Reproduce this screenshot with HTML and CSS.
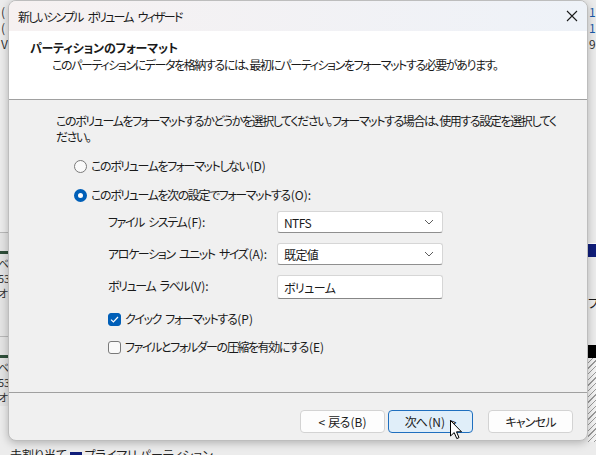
FILE: index.html
```html
<!doctype html>
<html>

<head>
    <meta charset="utf-8" />
    <title>新しいシンプル ボリューム ウィザード</title>
    <link rel="stylesheet" href="styles.css">
</head>

<body>

	<!-- disk management window behind the wizard -->
	<div class="backwin">
		<div class="bw-list">
			<div class="bw-row">(</div>
			<div class="bw-row">(</div>
			<div class="bw-row">V</div>
		</div>
		<div class="bw-list bw-right">
			<div class="bw-row blue">1</div>
			<div class="bw-row blue">1</div>
			<div class="bw-row">9</div>
		</div>
		<div class="bw-disk d1"><span class="bw-bar green"></span><span>ベー</span><span>53</span><span>オン</span></div>
		<div class="bw-disk d2"><span class="bw-bar green"></span><span>ベー</span><span>53</span><span>オン</span></div>
		<div class="bw-navy"></div>
		<div class="bw-pu">プ</div>
		<div class="bw-black"></div>
		<div class="bw-hatch"></div>
		<div class="bw-legend">未割り当て <span class="sw"></span> プライマリ パーティション</div>
	</div>

	<div class="dialog">
		<div class="titlebar">
			<span class="title">新しいシンプル ボリューム ウィザード</span>
			<svg class="close" width="12" height="12" viewBox="0 0 12 12">
				<path d="M1 1 L11 11 M11 1 L1 11" stroke="#1b1b1b" stroke-width="1.1" fill="none"/>
			</svg>
		</div>

		<div class="header">
			<div class="h-title">パーティションのフォーマット</div>
			<div class="h-sub">このパーティションにデータを格納するには、最初にパーティションをフォーマットする必要があります。</div>
		</div>

		<div class="content">
			<p class="intro">このボリュームをフォーマットするかどうかを選択してください。フォーマットする場合は、使用する設定を選択してく<br>ださい。</p>

			<div class="opt radio-row">
				<span class="radio"></span>
				<span>このボリュームをフォーマットしない<span class="key">(D)</span></span>
			</div>
			<div class="opt radio-row second">
				<span class="radio on"></span>
				<span>このボリュームを次の設定でフォーマットする<span class="key">(O):</span></span>
			</div>

			<div class="settings">
				<label>ファイル システム<span class="key">(F):</span></label>
				<div class="combo">NTFS
					<svg width="10" height="6" viewBox="0 0 10 6"><path d="M1 1 L5 5 L9 1" stroke="#5d5d5d" fill="none" stroke-width="1"/></svg>
				</div>
				<label>アロケーション ユニット サイズ<span class="key">(A):</span></label>
				<div class="combo">既定値
					<svg width="10" height="6" viewBox="0 0 10 6"><path d="M1 1 L5 5 L9 1" stroke="#5d5d5d" fill="none" stroke-width="1"/></svg>
				</div>
				<label>ボリューム ラベル<span class="key">(V):</span></label>
				<div class="textbox">ボリューム</div>
			</div>

			<div class="opt check-row">
				<span class="check on">
					<svg width="9" height="7" viewBox="0 0 9 7"><path d="M1 3.6 L3.4 6 L8 1" stroke="#fff" fill="none" stroke-width="1.2"/></svg>
				</span>
				<span>クイック フォーマットする<span class="key">(P)</span></span>
			</div>
			<div class="opt check-row second">
				<span class="check"></span>
				<span>ファイルとフォルダーの圧縮を有効にする<span class="key">(E)</span></span>
			</div>
		</div>

		<div class="footer">
			<button class="btn">&lt; 戻る<span class="key">(B)</span></button>
			<button class="btn focus">次へ<span class="key">(N) &gt;</span></button>
			<button class="btn cancel">キャンセル</button>
		</div>

		<!-- mouse pointer over the next button -->
		<svg class="pointer" width="13" height="20" viewBox="0 0 13 20">
			<path d="M0.5 0.5 L0.5 16 L4.2 12.6 L6.8 18.6 L9 17.6 L6.5 11.8 L11.5 11.8 Z" fill="#fff" stroke="#000" stroke-width="1"/>
		</svg>
	</div>

</body>

</html>
```

FILE: styles.css
```css
* {
	margin: 0;
	padding: 0;
	box-sizing: border-box;
}

body {
	width: 596px;
	height: 455px;
	overflow: hidden;
	position: relative;
	background: #d9d9d9;
	font-family: "Noto Sans CJK JP", "Noto Sans", sans-serif;
	font-feature-settings: "palt";
	font-size: 12px;
	letter-spacing: -1.4px;
	word-spacing: 3px;
	color: #1a1a1a;
}

/* accelerator keys keep normal latin spacing */
.key {
	letter-spacing: 0;
	padding-left: 1px;
}

/* window behind */
.backwin {
	position: absolute;
	inset: 0;
	background: #ececec;
	letter-spacing: 0;
	word-spacing: 0;
}

.bw-list {
	position: absolute;
	left: 1px;
	top: 4px;
	font-size: 12px;
	color: #333;
}

.bw-right {
	left: 589px;
}

.bw-row {
	height: 16px;
	line-height: 16px;
}

.bw-row.blue {
	color: #1a5aa8;
}

.bw-disk {
	position: absolute;
	left: 0;
	width: 10px;
	display: flex;
	flex-direction: column;
	font-size: 11px;
	line-height: 15px;
	color: #333;
	border-top: 1px solid #b8b8b8;
	overflow: hidden;
	white-space: nowrap;
	background: #e4e4e4;
}

.bw-disk span {
	margin-left: -2px;
}

.d1 {
	top: 232px;
	height: 104px;
}

.d2 {
	top: 336px;
	height: 70px;
}

.bw-bar {
	display: block;
	height: 3px;
	margin: 18px 0 2px 0;
	background: #2f4f3a;
}

.bw-navy {
	position: absolute;
	left: 588px;
	top: 243px;
	width: 8px;
	height: 14px;
	background: #101e7a;
	border-top: 1px solid #fff;
}

.bw-pu {
	position: absolute;
	left: 588px;
	top: 294px;
	font-size: 12px;
}

.bw-black {
	position: absolute;
	left: 588px;
	top: 345px;
	width: 8px;
	height: 13px;
	background: #000;
}

.bw-hatch {
	position: absolute;
	left: 588px;
	top: 358px;
	width: 8px;
	height: 84px;
	background: repeating-linear-gradient(135deg, #f4f4f4 0 3px, #9a9a9a 3px 4px);
}

.bw-legend {
	position: absolute;
	left: 10px;
	top: 446px;
	font-size: 12px;
	line-height: 18px;
	color: #222;
	white-space: nowrap;
}

.bw-legend .sw {
	display: inline-block;
	width: 12px;
	height: 10px;
	background: #101e7a;
	vertical-align: middle;
}

/* wizard dialog */
.dialog {
	position: absolute;
	left: 8px;
	top: 0;
	width: 580px;
	height: 441px;
	background: #f0f0f0;
	border: 1px solid #bdbdbd;
	border-radius: 8px;
	box-shadow: 0 2px 8px rgba(0, 0, 0, 0.25);
	overflow: hidden;
	display: flex;
	flex-direction: column;
}

.titlebar {
	height: 30px;
	flex: none;
	display: flex;
	align-items: center;
	justify-content: space-between;
	padding: 0 9px 0 9px;
	background: linear-gradient(90deg, #f6f1f1, #eef2f8);
}

.title {
	font-size: 12px;
	letter-spacing: -1.8px;
	word-spacing: 4px;
	color: #1a1a1a;
}

.close {
	margin-top: -1px;
}

.header {
	height: 69px;
	flex: none;
	background: #fff;
	border-bottom: 1px solid #a0a0a0;
	padding: 8px 0 0 21px;
}

.h-title {
	font-weight: bold;
	letter-spacing: -0.2px;
	line-height: 17px;
}

.h-sub {
	padding-left: 22px;
	line-height: 17px;
}

.content {
	flex: 1;
	padding: 13px 0 0 47px;
	border-bottom: 1px solid #a0a0a0;
}

.intro {
	line-height: 16px;
	white-space: nowrap;
}

.opt {
	display: flex;
	align-items: center;
	gap: 4px;
	height: 20px;
	line-height: 20px;
}

.radio-row {
	margin: 11px 0 0 18px;
}

.radio-row.second {
	margin-top: 9px;
}

.radio {
	width: 13px;
	height: 13px;
	flex: none;
	border-radius: 50%;
	border: 1px solid #7a7a7a;
	background: #fafafa;
}

.radio.on {
	border: 4px solid #005fb8;
	background: #fff;
}

.settings {
	display: grid;
	grid-template-columns: 169px 166px;
	grid-auto-rows: 22px;
	row-gap: 10px;
	align-items: center;
	margin: 6px 0 0 52px;
}

.settings label {
	line-height: 22px;
	white-space: nowrap;
}

.combo, .textbox {
	height: 22px;
	background: #fff;
	border: 1px solid #d6d6d6;
	border-bottom-color: #8f8f8f;
	border-radius: 3px;
	padding: 0 8px 0 6px;
	display: flex;
	align-items: center;
	justify-content: space-between;
	letter-spacing: -0.6px;
}

.textbox {
	height: 24px;
	margin-top: 2px;
	border-bottom: 1px solid #868686;
}

.check-row {
	margin: 12px 0 0 52px;
}

.check-row.second {
	margin-top: 8px;
}

.check {
	width: 13px;
	height: 13px;
	flex: none;
	border: 1px solid #7a7a7a;
	border-radius: 3px;
	background: #fafafa;
	display: flex;
	align-items: center;
	justify-content: center;
}

.check.on {
	border-color: #005fb8;
	background: #005fb8;
}

.footer {
	height: 47px;
	flex: none;
	display: flex;
	align-items: flex-start;
	justify-content: flex-end;
	padding: 17px 14px 0 0;
	gap: 3px;
}

.btn {
	width: 85px;
	height: 23px;
	font-family: inherit;
	font-feature-settings: "palt";
	font-size: 12px;
	letter-spacing: -0.8px;
	word-spacing: 2px;
	color: #1a1a1a;
	background: #fdfdfd;
	border: 1px solid #d3d3d3;
	border-radius: 4px;
}

.btn .key {
	letter-spacing: 0;
}

.btn.focus {
	background: #e0eef9;
	border-color: #1f6fbf;
}

.btn.cancel {
	margin-left: 12px;
}

.pointer {
	position: absolute;
	left: 441px;
	top: 419px;
}
```
